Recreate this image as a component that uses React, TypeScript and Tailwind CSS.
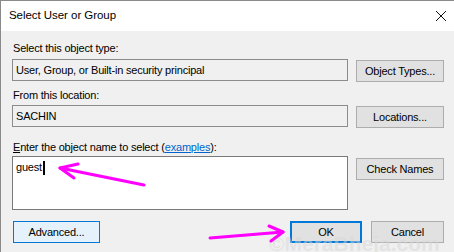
import React from "react";

const font = { fontFamily: '"Liberation Sans", Arial, sans-serif' };

function Btn({ children, w, extra = "" }: { children: React.ReactNode; w: string; extra?: string }) {
  return (
    <div
      className={`${w} h-[22px] flex items-center justify-center text-black bg-[#e1e1e1] border border-[#adadad] ${extra}`}
    >
      {children}
    </div>
  );
}

export default function App() {
  return (
    <div
      className="relative w-[454px] h-[252px] overflow-hidden bg-[#f0f0f0] border-l border-t border-[#8a8a8a] flex flex-col"
      style={font}
    >
      {/* title bar */}
      <div className="h-[30px] bg-white flex items-center justify-between pl-[8px] pr-[6px] shrink-0">
        <span className="text-[11.5px] tracking-[-0.05px] text-black leading-none">Select User or Group</span>
        <svg width="12" height="12" viewBox="0 0 12 12" className="mr-[1px]">
          <path d="M1 1 L11 11 M11 1 L1 11" stroke="#111" strokeWidth="1" />
        </svg>
      </div>

      <div className="flex flex-col pl-[11px] pr-[9px] text-[11px] tracking-[-0.2px] text-black leading-[15px]">
        <div className="mt-[10px] h-[15px] pl-[1px]">Select this object type:</div>
        <div className="mt-[3px] flex items-start gap-[8px]">
          <div className="w-[336px] h-[22px] border border-[#8c8c8c] bg-[#f0f0f0] flex items-center pl-[3px]">
            User, Group, or Built-in security principal
          </div>
          <Btn w="w-[88px]" extra="mt-[1px]">Object Types...</Btn>
        </div>

        <div className="mt-[6px] h-[15px] pl-[1px]">From this location:</div>
        <div className="mt-[2px] flex items-start gap-[8px]">
          <div className="w-[336px] h-[22px] border border-[#8c8c8c] bg-[#f0f0f0] flex items-center pl-[3px]">
            SACHIN
          </div>
          <Btn w="w-[88px]" extra="mt-[1px]">Locations...</Btn>
        </div>

        <div className="mt-[12px] h-[15px] pl-[1px]">
          <span className="underline">E</span>nter the object name to select (
          <span className="text-[#0066cc] underline">examples</span>):
        </div>
        <div className="mt-[1px] flex items-start gap-[8px]">
          <div className="w-[336px] h-[54px] border border-[#7a7a7a] bg-white pl-[3px] pt-[3px] flex items-start">
            <span>guest</span>
            <span className="inline-block w-[2px] h-[14px] bg-black ml-[1px] mt-[1px]" />
          </div>
          <Btn w="w-[88px]" extra="mt-[2px]">Check Names</Btn>
        </div>

        <div className="mt-[11px] flex items-start">
          <div className="ml-[1px] w-[87px] h-[22px] flex items-center justify-center bg-[#e5f1fb] border border-[#0078d7]">
            Advanced...
          </div>
          <div className="ml-[190px] w-[72px] h-[22px] flex items-center justify-center bg-[#e1e1e1] border-2 border-[#0078d7]">
            OK
          </div>
          <Btn w="w-[73px]" extra="ml-[9px]">Cancel</Btn>
        </div>
      </div>

      {/* watermark */}
      <div
        className="absolute left-[268px] top-[232px] text-[21px] font-bold leading-none text-[#d8d8d8] opacity-50 pointer-events-none"
        style={{ fontFamily: '"Liberation Sans", Arial, sans-serif' }}
      >
        ©MeraBheja.com
      </div>

      {/* annotation arrows */}
      <svg className="absolute left-0 top-0 pointer-events-none" width="454" height="252">
        <g stroke="#ff00ff" strokeWidth="3" strokeLinecap="round" fill="none">
          <path d="M143 184 L59 167" />
          <path d="M59 167 L77 163 M59 167 L73 177" />
          <path d="M209 237 L282 231" />
          <path d="M282 231 L268 225 M282 231 L270 240" />
        </g>
      </svg>
    </div>
  );
}
